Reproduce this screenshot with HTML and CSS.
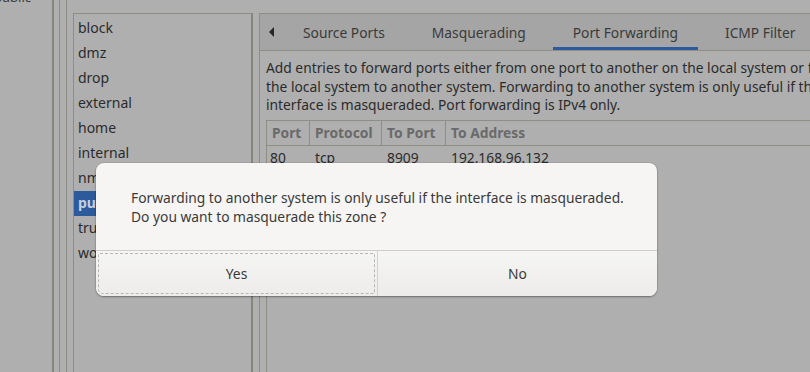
FILE: index.html
```html
<!DOCTYPE html>
<html>
<head>
<meta charset="utf-8">
<link rel="stylesheet" href="styles.css">
</head>
<body>
<div class="screen">
  <div class="side">
    <div class="side-label">public</div>
  </div>
  <div class="vline dark"></div>
  <div class="gap5"></div>
  <div class="vline"></div>
  <div class="gap6"></div>
  <div class="vline"></div>
  <div class="gap6"></div>
  <div class="zones">
    <div class="zone">block</div>
    <div class="zone">dmz</div>
    <div class="zone">drop</div>
    <div class="zone">external</div>
    <div class="zone">home</div>
    <div class="zone">internal</div>
    <div class="zone">nm-shared</div>
    <div class="zone selected">public</div>
    <div class="zone">trusted</div>
    <div class="zone">work</div>
  </div>
  <div class="gap6"></div>
  <div class="notebook">
    <div class="tabs">
      <div class="arrow"></div>
      <div class="tab">Source Ports</div>
      <div class="tab">Masquerading</div>
      <div class="tab active">Port Forwarding</div>
      <div class="tab">ICMP Filter</div>
    </div>
    <div class="page">
      <p class="desc">Add entries to forward ports either from one port to another on the local system or from<br>the local system to another system. Forwarding to another system is only useful if the<br>interface is masqueraded. Port forwarding is IPv4 only.</p>
      <div class="table">
        <div class="thead">
          <div class="th c1">Port</div>
          <div class="th c2">Protocol</div>
          <div class="th c3">To Port</div>
          <div class="th c4">To Address</div>
        </div>
        <div class="trow">
          <div class="td c1">80</div>
          <div class="td c2">tcp</div>
          <div class="td c3">8909</div>
          <div class="td c4">192.168.96.132</div>
        </div>
      </div>
    </div>
  </div>
</div>

<div class="dialog">
  <div class="msg">
    <p>Forwarding to another system is only useful if the interface is masqueraded.<br>Do you want to masquerade this zone ?</p>
  </div>
  <div class="buttons">
    <div class="btn focused"><span>Yes</span></div>
    <div class="btn"><span>No</span></div>
  </div>
</div>
</body>
</html>
```
FILE: styles.css
```css
html, body {
  margin: 0;
  padding: 0;
}
body {
  width: 810px;
  height: 372px;
  overflow: hidden;
  background: #afafaf;
  font-family: "Noto Sans", "Open Sans", sans-serif;
  font-size: 13.8px;
  color: #2b2b2b;
  position: relative;
}
.screen {
  display: flex;
  height: 372px;
}
.side {
  width: 52px;
  flex: none;
  overflow: hidden;
}
.side-label {
  margin-top: -12px;
  margin-left: -6px;
  font-size: 13px;
  color: #3a3a3a;
}
.vline {
  width: 1px;
  flex: none;
  background: #8c8b84;
}
.vline.dark {
  width: 2px;
  background: #85847d;
}
.gap5 { width: 5px; flex: none; }
.gap6 { width: 6px; flex: none; }

.zones {
  margin-top: 13px;
  width: 177px;
  flex: none;
  border: 1px solid #8e8d86;
  border-right: 2px solid #85847d;
  border-bottom: none;
  padding-top: 2px;
}
.zone {
  height: 25px;
  line-height: 24px;
  padding-left: 4px;
  white-space: nowrap;
  overflow: hidden;
  font-size: 14px;
}
.zone.selected {
  background: #2c5a9c;
  color: #c5cfdd;
  font-weight: bold;
}

.notebook {
  margin-top: 13px;
  flex: 1;
  border-left: 1px solid #8e8d86;
  border-top: 1px solid #8e8d86;
  display: flex;
  flex-direction: column;
  min-width: 0;
}
.tabs {
  height: 36px;
  background: #a5a5a5;
  border-bottom: 1px solid #8e8d86;
  display: flex;
  align-items: stretch;
  gap: 7px;
  white-space: nowrap;
}
.arrow {
  width: 0;
  height: 0;
  border-top: 5px solid transparent;
  border-bottom: 5px solid transparent;
  border-right: 5px solid #252525;
  align-self: center;
  margin-left: 9px;
  margin-right: 2px;
}
.tab {
  padding: 0 20px;
  display: flex;
  align-items: center;
  color: #3a3a3a;
  padding-top: 1px;
  box-sizing: border-box;
}
.tab.active {
  box-shadow: inset 0 -3px 0 #2c5a9c;
}
.page {
  flex: 1;
  padding-left: 6px;
  overflow: hidden;
}
.desc {
  margin: 8px 0 0 0;
  line-height: 18.5px;
  white-space: nowrap;
}
.table {
  margin-top: 5px;
  border-left: 1px solid #8e8d86;
  border-top: 1px solid #8e8d86;
  height: 300px;
}
.thead {
  display: flex;
  height: 24px;
  border-bottom: 1px solid #8e8d86;
}
.th {
  color: #6a6a6a;
  font-weight: bold;
  line-height: 24px;
  padding-left: 5px;
  box-sizing: border-box;
  border-right: 1px solid #8e8d86;
  white-space: nowrap;
}
.th.c4 { border-right: none; }
.c1 { width: 43px; flex: none; }
.c2 { width: 72px; flex: none; }
.c3 { width: 64px; flex: none; }
.c4 { flex: 1; }
.trow {
  display: flex;
  height: 24px;
}
.td {
  line-height: 24px;
  padding-left: 3px;
  box-sizing: border-box;
  white-space: nowrap;
}
.td.c2, .td.c3, .td.c4 { padding-left: 5px; }

.dialog {
  position: absolute;
  left: 96px;
  top: 163px;
  width: 561px;
  height: 133px;
  background: #f6f5f4;
  border-radius: 8px;
  box-shadow: 0 1px 2px rgba(0,0,0,0.35), 0 0 0 1px rgba(0,0,0,0.06);
  display: flex;
  flex-direction: column;
  overflow: hidden;
  color: #3a3a3a;
}
.msg {
  height: 88px;
  border-bottom: 1px solid #cfcdca;
  padding: 25px 0 0 35px;
  box-sizing: border-box;
}
.msg p {
  margin: 0;
  line-height: 19px;
}
.buttons {
  flex: 1;
  display: flex;
}
.btn {
  flex: none;
  width: 281px;
  display: flex;
  align-items: center;
  justify-content: center;
  background: linear-gradient(#f5f5f4, #edeceb);
  position: relative;
}
.btn + .btn {
  flex: 1;
  border-left: 1px solid #d3d1ce;
}
.btn.focused::after {
  content: "";
  position: absolute;
  left: 2px;
  top: 2px;
  right: 2px;
  bottom: 2px;
  border: 1px dashed #b8b6b3;
  border-radius: 2px 2px 2px 5px;
}
```
